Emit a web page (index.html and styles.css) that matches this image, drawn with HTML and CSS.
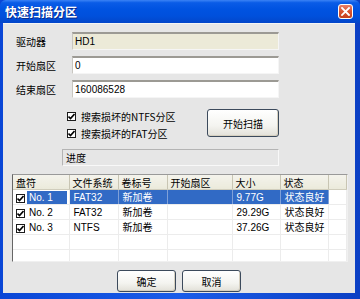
FILE: index.html
```html
<!DOCTYPE html>
<html>
<head>
<meta charset="utf-8">
<link rel="stylesheet" href="styles.css">
</head>
<body>
<div class="window">
  <div class="titlebar">
    <span class="title">快速扫描分区</span>
    <span class="close"><svg width="9" height="9" viewBox="0 0 9 9"><path d="M1 1 L8 8 M8 1 L1 8" stroke="#fff" stroke-width="1.8" stroke-linecap="square"/></svg></span>
  </div>
  <div class="client">
    <div class="form">
      <span class="label">驱动器</span><div class="field ro">HD1</div>
      <span class="label">开始扇区</span><div class="field">0</div>
      <span class="label">结束扇区</span><div class="field">160086528</div>
    </div>
    <div class="options">
      <div class="checks">
        <div class="check"><span class="cb"><svg width="7" height="7" viewBox="0 0 7 7"><path d="M0.5 3.5 L2.5 5.5 L6.5 1" fill="none" stroke="#000" stroke-width="1.6"/></svg></span>搜索损坏的NTFS分区</div>
        <div class="check"><span class="cb"><svg width="7" height="7" viewBox="0 0 7 7"><path d="M0.5 3.5 L2.5 5.5 L6.5 1" fill="none" stroke="#000" stroke-width="1.6"/></svg></span>搜索损坏的FAT分区</div>
      </div>
      <button class="btn scan">开始扫描</button>
    </div>
    <div class="progress">进度</div>
    <div class="list">
      <table>
        <colgroup><col class="c1"><col class="c2"><col class="c3"><col class="c4"><col class="c5"><col class="c6"><col></colgroup>
        <thead>
          <tr><th>盘符</th><th>文件系统</th><th>卷标号</th><th>开始扇区</th><th>大小</th><th>状态</th><th></th></tr>
        </thead>
        <tbody>
          <tr class="sel"><td class="first"><span class="cb"><svg width="7" height="7" viewBox="0 0 7 7"><path d="M0.5 3.5 L2.5 5.5 L6.5 1" fill="none" stroke="#000" stroke-width="1.6"/></svg></span><span class="hl">No. 1</span></td><td class="hc">FAT32</td><td class="hc">新加卷</td><td class="hc"></td><td class="hc">9.77G</td><td class="hc">状态良好</td><td></td></tr>
          <tr><td class="first"><span class="cb"><svg width="7" height="7" viewBox="0 0 7 7"><path d="M0.5 3.5 L2.5 5.5 L6.5 1" fill="none" stroke="#000" stroke-width="1.6"/></svg></span><span class="hl">No. 2</span></td><td>FAT32</td><td>新加卷</td><td></td><td>29.29G</td><td>状态良好</td><td></td></tr>
          <tr><td class="first"><span class="cb"><svg width="7" height="7" viewBox="0 0 7 7"><path d="M0.5 3.5 L2.5 5.5 L6.5 1" fill="none" stroke="#000" stroke-width="1.6"/></svg></span><span class="hl">No. 3</span></td><td>NTFS</td><td>新加卷</td><td></td><td>37.26G</td><td>状态良好</td><td></td></tr>
          <tr class="empty"><td></td><td></td><td></td><td></td><td></td><td></td><td></td></tr>
          <tr class="empty"><td></td><td></td><td></td><td></td><td></td><td></td><td></td></tr>
        </tbody>
      </table>
    </div>
    <div class="actions">
      <button class="btn act">确定</button>
      <button class="btn act">取消</button>
    </div>
  </div>
</div>
</body>
</html>
```
FILE: styles.css
```css
html, body {
  margin: 0;
  padding: 0;
  background: #fff;
}
body {
  font-family: "Liberation Sans", "Noto Sans CJK SC", sans-serif;
  font-size: 10px;
  color: #000;
}
.window {
  width: 360px;
  height: 299px;
  box-sizing: border-box;
  display: flex;
  flex-direction: column;
  background: linear-gradient(90deg, #0a46d6 0%, #1a5ce8 50%, #0b3fc4 100%);
  padding: 0 5px 6px 3px;
}
.titlebar {
  height: 23px;
  flex: none;
  display: flex;
  align-items: center;
  justify-content: space-between;
  margin: 0 -5px 0 -3px;
  padding: 0 5px 0 5px;
  background: linear-gradient(180deg, #3b83f5 0%, #0a5ce7 12%, #0053e1 40%, #0050dc 70%, #0346c9 100%);
  border-radius: 6px 6px 0 0;
}
.title {
  color: #fff;
  font-family: "Noto Sans CJK SC", sans-serif;
  font-weight: bold;
  font-size: 12px;
  text-shadow: 1px 1px 0 #0a2a8a;
}
.close {
  width: 15px;
  height: 15px;
  box-sizing: border-box;
  border: 1px solid #fff;
  border-radius: 3px;
  background: linear-gradient(180deg, #e8806a 0%, #d9532f 50%, #c4411e 100%);
  display: flex;
  align-items: center;
  justify-content: center;
  margin-right: 2px;
}
.client {
  flex: 1;
  background: #e6e6e6;
  border-top: 1px solid #f4f4f4;
  display: flex;
  flex-direction: column;
  padding: 8px 0 0 9px;
}
.form {
  display: grid;
  grid-template-columns: 56px 207px;
  row-gap: 6px;
  align-items: center;
  padding-left: 4px;
}
.label {
  font-family: "Noto Sans CJK SC", sans-serif;
  font-size: 10px;
}
.field {
  height: 18px;
  box-sizing: border-box;
  background: #fff;
  border-top: 2px solid #9c9a94;
  border-left: 1px solid #c8c6c0;
  border-right: 1px solid #f5f5f5;
  border-bottom: 1px solid #f5f5f5;
  padding-left: 2px;
  font-size: 10px;
  line-height: 15px;
}
.field.ro {
  background: #ecead8;
}
.options {
  display: flex;
  align-items: flex-start;
  margin-top: 11px;
  padding-left: 55px;
}
.checks {
  display: flex;
  flex-direction: column;
  gap: 2px;
  width: 140px;
}
.check {
  display: flex;
  align-items: center;
  height: 15px;
  font-family: "Noto Sans CJK SC", sans-serif;
  font-size: 10px;
}
.cb {
  width: 9px;
  height: 9px;
  box-sizing: border-box;
  border: 1px solid #1c1c1c;
  background: #fff;
  display: inline-flex;
  align-items: center;
  justify-content: center;
  margin-right: 5px;
  flex: none;
}
.btn {
  font-family: "Noto Sans CJK SC", sans-serif;
  font-size: 10px;
  color: #000;
  border: 1px solid #3c4a5c;
  border-radius: 3px;
  background: linear-gradient(180deg, #ffffff 0%, #f4f4f0 60%, #e2e0d8 100%);
  box-shadow: inset -1px -1px 0 #d6d0c0;
  padding: 0;
}
.scan {
  width: 72px;
  height: 28px;
  margin-left: 0;
}
.progress {
  margin: 8px 0 0 50px;
  width: 217px;
  height: 17px;
  box-sizing: border-box;
  border-top: 1px solid #b4b4b4;
  border-left: 1px solid #b4b4b4;
  border-right: 1px solid #f8f8f8;
  border-bottom: 1px solid #f8f8f8;
  padding-left: 3px;
  font-family: "Noto Sans CJK SC", sans-serif;
  font-size: 10px;
  line-height: 15px;
}
.list {
  margin: 8px 0 0 0;
  width: 336px;
  height: 88px;
  box-sizing: border-box;
  background: #fff;
  border-top: 1px solid #999;
  border-left: 1px solid #666;
  border-right: 1px solid #f0f0f0;
  border-bottom: 1px solid #f0f0f0;
  overflow: hidden;
}
table {
  border-collapse: collapse;
  table-layout: fixed;
  width: 334px;
}
col.c1 { width: 56px; }
col.c2 { width: 49px; }
col.c3 { width: 49px; }
col.c4 { width: 65px; }
col.c5 { width: 48px; }
col.c6 { width: 48px; }
th {
  height: 14px;
  padding: 0 0 0 3px;
  background: linear-gradient(180deg, #f4f3ec 0%, #ebeadb 100%);
  border-right: 1px solid #c8c5b3;
  border-bottom: 1px solid #d0cdbc;
  text-align: left;
  font-family: "Noto Sans CJK SC", sans-serif;
  font-weight: normal;
  font-size: 10px;
  line-height: 13px;
  white-space: nowrap;
  overflow: hidden;
}
td {
  height: 14px;
  padding: 0 0 0 4px;
  border-right: 1px solid #ececec;
  border-bottom: 1px solid #ececec;
  font-size: 10px;
  line-height: 13px;
  white-space: nowrap;
  overflow: hidden;
  font-family: "Liberation Sans", "Noto Sans CJK SC", sans-serif;
}
td.first {
  padding-left: 3px;
}
td.first .cb {
  margin-right: 2px;
  vertical-align: -1px;
}
.hl {
  display: inline-block;
  width: 40px;
  padding: 0 2px;
  box-sizing: border-box;
}
tr.sel .hl, tr.sel td.hc {
  background: #316ac5;
  color: #fff;
}
tr.sel td.hc {
  border-right-color: #7fa0d8;
}
.actions {
  display: flex;
  justify-content: center;
  gap: 6px;
  margin-top: 8px;
  padding-right: 9px;
}
.act {
  width: 59px;
  height: 22px;
}
```
